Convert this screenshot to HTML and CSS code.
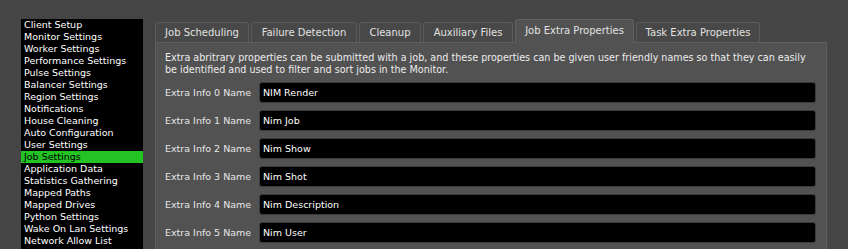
FILE: index.html
```html
<!DOCTYPE html>
<html>
<head>
<meta charset="utf-8">
<link rel="stylesheet" href="styles.css">
</head>
<body>
<div class="app">
  <ul class="nav">
    <li>Client Setup</li>
    <li>Monitor Settings</li>
    <li>Worker Settings</li>
    <li>Performance Settings</li>
    <li>Pulse Settings</li>
    <li>Balancer Settings</li>
    <li>Region Settings</li>
    <li>Notifications</li>
    <li>House Cleaning</li>
    <li>Auto Configuration</li>
    <li>User Settings</li>
    <li class="selected">Job Settings</li>
    <li>Application Data</li>
    <li>Statistics Gathering</li>
    <li>Mapped Paths</li>
    <li>Mapped Drives</li>
    <li>Python Settings</li>
    <li>Wake On Lan Settings</li>
    <li>Network Allow List</li>
  </ul>
  <div class="main">
    <div class="tabs">
      <div class="tab t1">Job Scheduling</div>
      <div class="tab t2">Failure Detection</div>
      <div class="tab t3">Cleanup</div>
      <div class="tab t4">Auxiliary Files</div>
      <div class="tab t5 active">Job Extra Properties</div>
      <div class="tab t6">Task Extra Properties</div>
    </div>
    <div class="panel">
      <p class="desc">Extra abritrary properties can be submitted with a job, and these properties can be given user friendly names so that they can easily be identified and used to filter and sort jobs in the Monitor.</p>
      <div class="rows">
        <div class="row"><span class="label">Extra Info 0 Name</span><div class="field">NIM Render</div></div>
        <div class="row"><span class="label">Extra Info 1 Name</span><div class="field">Nim Job</div></div>
        <div class="row"><span class="label">Extra Info 2 Name</span><div class="field">Nim Show</div></div>
        <div class="row"><span class="label">Extra Info 3 Name</span><div class="field">Nim Shot</div></div>
        <div class="row"><span class="label">Extra Info 4 Name</span><div class="field">Nim Description</div></div>
        <div class="row"><span class="label">Extra Info 5 Name</span><div class="field">Nim User</div></div>
      </div>
    </div>
  </div>
</div>
</body>
</html>
```

FILE: styles.css
```css
html, body {
  margin: 0;
  padding: 0;
  background: #454545;
  height: 249px;
  overflow: hidden;
}
body {
  font-family: "DejaVu Sans", "Lucida Grande", sans-serif;
  color: #e6e6e6;
}
.app {
  display: flex;
  align-items: flex-start;
  padding-left: 21px;
  padding-top: 19px;
  gap: 12px;
  height: 230px;
  overflow: hidden;
}
.nav {
  list-style: none;
  margin: 0;
  padding: 0;
  width: 122px;
  height: 230px;
  background: #000;
  font-size: 9.5px;
  color: #fff;
}
.nav li {
  height: 12px;
  line-height: 12px;
  padding-left: 3px;
  white-space: nowrap;
}
.nav li.selected {
  background: #22c322;
  color: #000;
}
.main {
  width: 672px;
  display: flex;
  flex-direction: column;
}
.tabs {
  display: flex;
  align-items: flex-end;
  gap: 2px;
  height: 23px;
  position: relative;
  z-index: 1;
}
.tab {
  box-sizing: border-box;
  height: 20px;
  background: #484848;
  border: 1px solid #5c5c5c;
  border-bottom: none;
  border-radius: 3px 3px 0 0;
  font-size: 10px;
  line-height: 19px;
  text-align: center;
  color: #e2e2e2;
  white-space: nowrap;
}
.tab.active {
  line-height: 22px;
  background: #525252;
  border-color: #626262;
  margin-bottom: -1px;
  height: 24px;
}
.t1 { width: 94px; }
.t2 { width: 106px; }
.t3 { width: 62px; }
.t4 { width: 90px; }
.t5 { width: 119px; }
.t6 { width: 124px; }
.panel {
  background: #525252;
  border: 1px solid #5e5e5e;
  border-bottom: none;
  padding: 9px 10px 0 9px;
  height: 198px;
}
.desc {
  margin: 0;
  font-size: 9.6px;
  line-height: 12px;
  color: #ececec;
}
.rows {
  display: flex;
  flex-direction: column;
  gap: 7px;
  margin-top: 6px;
}
.row {
  display: flex;
  align-items: center;
  height: 21px;
}
.label {
  width: 94px;
  flex: none;
  font-size: 9.5px;
  color: #e6e6e6;
  white-space: nowrap;
}
.field {
  flex: 1;
  box-sizing: border-box;
  height: 21px;
  background: #000;
  border: 1px solid #3c3c3c;
  border-radius: 3px;
  padding-left: 3px;
  font-size: 9.5px;
  line-height: 19px;
  color: #fff;
}
```
